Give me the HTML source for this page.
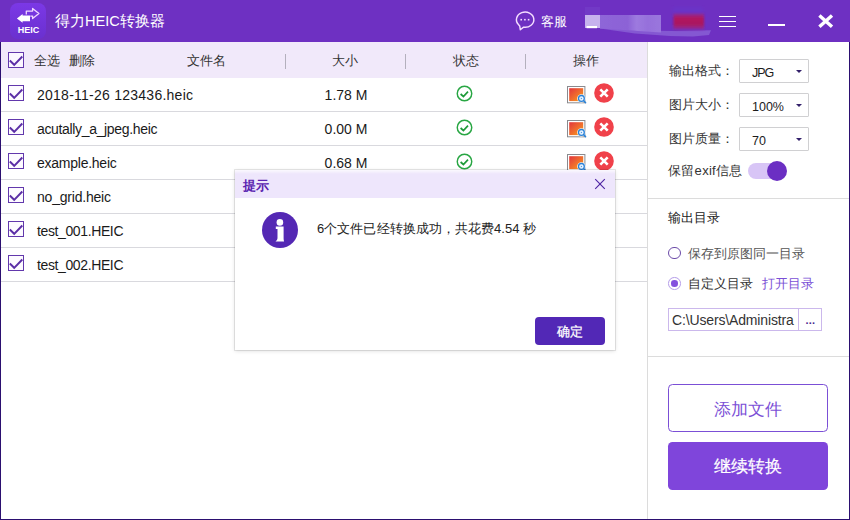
<!DOCTYPE html>
<html lang="zh">
<head>
<meta charset="utf-8">
<title>得力HEIC转换器</title>
<style>
*{box-sizing:border-box;margin:0;padding:0}
html,body{width:850px;height:520px;overflow:hidden;background:#fff}
body{font-family:"Liberation Sans",sans-serif;font-size:13px;color:#333}
#win{position:relative;width:850px;height:520px;overflow:hidden;background:#fff}
.abs{position:absolute}
.t{position:absolute;white-space:nowrap;line-height:20px;height:20px}
/* title bar */
#tb{position:absolute;left:0;top:0;width:850px;height:42px;background:#6e30c2}
#logo{position:absolute;left:10px;top:3px;width:36px;height:36px;border-radius:8px;background:linear-gradient(180deg,#7b38e6 0%,#6a30cf 100%)}
#logo .h{position:absolute;left:0;width:36px;top:22px;text-align:center;font-size:9px;font-weight:bold;color:#fff;line-height:11px;padding-left:1px}
#ttl{left:55px;top:11px;font-size:14.6px;color:#fff}
/* list */
#lh{position:absolute;left:1px;top:42px;width:646px;height:36px;background:#f1e9fa}
.sep{position:absolute;top:54px;width:1px;height:15px;background:#b4b0bd}
.row{position:absolute;left:1px;width:646px;height:34px;border-bottom:1px solid #d9d9de;background:#fff}
.cb{position:absolute;left:7px;width:16px;height:16px}
.fn{position:absolute;left:36px;top:0;line-height:35px;font-size:14px;color:#1a1a1a;white-space:nowrap}
.sz{position:absolute;left:295px;width:100px;top:0;text-align:center;line-height:35px;font-size:14px;color:#1a1a1a;white-space:nowrap}
.ok{position:absolute;left:455px;top:7.4px;width:17px;height:17px}
.im{position:absolute;left:565px;top:8px;width:21px;height:19px}
.rx{position:absolute;left:593px;top:5px;width:20px;height:20px}
/* right panel */
#rp{position:absolute;left:647px;top:42px;width:202px;height:477px;background:#fff;border-left:1px solid #dcdcdc}
.hl{position:absolute;left:648px;width:201px;height:1px;background:#dcdcdc}
.lab{color:#333;font-size:13px}
.dd{position:absolute;left:739px;width:70px;height:24px;border:1px solid #d0d0d2;border-radius:1px;background:#fff}
.dd span{position:absolute;left:12px;top:0;line-height:26px;font-size:12.5px;color:#1c1c1c}
.dd i{position:absolute;left:55.5px;top:10px;width:0;height:0;border-left:3px solid transparent;border-right:3px solid transparent;border-top:3.6px solid #33206a}
.btn{position:absolute;left:668px;width:160px;height:48px;border-radius:4.5px;text-align:center;line-height:49px;font-size:17px}
/* dialog */
#dlg{position:absolute;left:235px;top:170px;width:380px;height:180px;background:#fff;box-shadow:0 0 0 1px rgba(0,0,0,.09),0 1px 4px rgba(0,0,0,.14)}
#dh{position:absolute;left:0;top:0;width:380px;height:28px;background:linear-gradient(180deg,rgba(255,255,255,.75) 0,rgba(255,255,255,0) 4px),#eee6fc}
</style>
</head>
<body>
<div id="win">

<!-- ============ TITLE BAR ============ -->
<div id="tb">
  <div id="logo">
    <svg class="abs" style="left:0;top:0" width="36" height="36" viewBox="0 0 36 36">
      <path d="M16.3 11.6 V8.1 H22.6 V5.5 L28.9 10.5 L22.6 15.5 V13.1 H20.3" fill="none" stroke="#f0d6ff" stroke-width="1.3" stroke-linejoin="round"/>
      <path d="M6.9 15.4 L12.6 11.1 V12.6 H20 V18.2 H12.6 V19.8 Z" fill="#fff"/>
    </svg>
    <div class="h">HEIC</div>
  </div>
  <div id="ttl" class="t">得力HEIC转换器</div>

  <!-- chat icon -->
  <svg class="abs" style="left:513px;top:9px" width="24" height="24" viewBox="0 0 24 24">
    <path d="M5.44 15.5 A8.7 7.6 0 1 1 10.6 18.13 L7.3 20.7 L6.7 16.9 Z" fill="none" stroke="#f4ddff" stroke-width="1.45" stroke-linejoin="round"/>
    <rect x="7.4" y="9.9" width="1.6" height="1.6" fill="#f4ddff"/><rect x="11.1" y="9.9" width="1.6" height="1.6" fill="#f4ddff"/><rect x="14.8" y="9.9" width="1.6" height="1.6" fill="#f4ddff"/>
  </svg>
  <div class="t" style="left:541px;top:12px;font-size:13px;color:#fff">客服</div>

  <!-- blurred (redacted) user name -->
  <svg class="abs" style="left:575px;top:0" width="150" height="42" viewBox="0 0 150 42">
    <defs>
      <filter id="b1" x="-10%" y="-30%" width="120%" height="160%"><feGaussianBlur stdDeviation=".7"/></filter>
      <filter id="b2" x="-10%" y="-30%" width="120%" height="160%"><feGaussianBlur stdDeviation="1.3"/></filter>
      <linearGradient id="gb" x1="0" y1="0" x2="1" y2="0"><stop offset="0" stop-color="#8e66d8"/><stop offset=".45" stop-color="#8c62d6"/><stop offset=".6" stop-color="#9d7adf"/><stop offset=".78" stop-color="#9670db"/><stop offset="1" stop-color="#9a76dd"/></linearGradient>
      <linearGradient id="gr" x1="0" y1="0" x2="0" y2="1"><stop offset="0" stop-color="#8a2a9c"/><stop offset=".3" stop-color="#b2175c"/><stop offset=".7" stop-color="#a81a62"/><stop offset="1" stop-color="#8a2ca4"/></linearGradient>
    </defs>
    <rect x="10" y="7" width="15" height="8" fill="#7744cb" opacity=".45" filter="url(#b1)"/>
    <path d="M25 27.6 L60 30.5 L100 31 L136 30.2 L134 35 L118 36.4 L95 36 L60 33.5 L25 28.6 Z" fill="#8458d2" filter="url(#b1)"/>
    <path d="M25 15 H86 V32.5 L25 28.4 Z" fill="url(#gb)" filter="url(#b1)"/>
    <rect x="10" y="15" width="15" height="13" fill="#c6b2ed" filter="url(#b1)"/>
    <rect x="11.5" y="26" width="10.5" height="2.2" fill="#fff" filter="url(#b1)"/>
    <rect x="98" y="7" width="30" height="6" fill="#6a36c8" opacity=".8" filter="url(#b2)"/>
    <rect x="98.5" y="13.5" width="30.5" height="16" fill="url(#gr)" filter="url(#b2)"/>
  </svg>

  <!-- menu / min / close -->
  <div class="abs" style="left:719px;top:16px;width:17px;height:1px;background:#fff"></div>
  <div class="abs" style="left:719px;top:21px;width:17px;height:1px;background:#fff"></div>
  <div class="abs" style="left:719px;top:26px;width:17px;height:1px;background:#fff"></div>
  <div class="abs" style="left:768px;top:24px;width:17px;height:2px;background:#fff"></div>
  <svg class="abs" style="left:816px;top:12px" width="20" height="18" viewBox="0 0 20 18">
    <path d="M3.4 3.4 L16 14.8 M16 3.4 L3.4 14.8" stroke="#fff" stroke-width="3.4" fill="none"/>
  </svg>
</div>

<!-- ============ LIST HEADER ============ -->
<div id="lh"></div>
<svg class="cb" style="left:8px;top:52px" viewBox="0 0 16 16"><rect x=".5" y=".5" width="15" height="15" fill="#fbf7ff" stroke="#6238ac"/><path d="M1.8 8.5 L6.2 12.8 L14.3 4.5" fill="none" stroke="#5b2ea6" stroke-width="1.9"/></svg>
<div class="t" style="left:34px;top:51px">全选</div>
<div class="t" style="left:69px;top:51px">删除</div>
<div class="t" style="left:187px;top:51px">文件名</div>
<div class="t" style="left:332px;top:51px">大小</div>
<div class="t" style="left:453px;top:51px">状态</div>
<div class="t" style="left:573px;top:51px">操作</div>
<div class="sep" style="left:285px"></div>
<div class="sep" style="left:405px"></div>
<div class="sep" style="left:525px"></div>

<!-- ============ ROWS ============ -->
<svg width="0" height="0" style="position:absolute">
  <defs>
    <linearGradient id="gimg" x1="0" y1="0" x2="1" y2="1"><stop offset="0" stop-color="#e2353d"/><stop offset=".55" stop-color="#f0702c"/><stop offset="1" stop-color="#f7a81c"/></linearGradient>
    <symbol id="s-cb" viewBox="0 0 16 16"><rect x=".5" y=".5" width="15" height="15" fill="#fdfbff" stroke="#6238ac"/><path d="M1.8 8.5 L6.2 12.8 L14.3 4.5" fill="none" stroke="#5b2ea6" stroke-width="1.9"/></symbol>
    <symbol id="s-ok" viewBox="0 0 17 17"><circle cx="8.5" cy="8.5" r="7.25" fill="#fff" stroke="#28a643" stroke-width="1.45"/><path d="M4.6 9 L7.4 11.5 L12 6.7" fill="none" stroke="#1d9a38" stroke-width="1.7"/></symbol>
    <symbol id="s-im" viewBox="0 0 21 19"><rect x="1.5" y=".5" width="17.4" height="16.3" fill="#fff" stroke="#8a8a8e"/><rect x="3.2" y="2.2" width="14" height="12.9" fill="url(#gimg)"/><circle cx="15.4" cy="12.4" r="4.2" fill="#fff"/><circle cx="15.4" cy="12.4" r="2.9" fill="#eef6ff" stroke="#2a82d8" stroke-width="1.3"/><path d="M17.8 14.8 L19.6 16.7" stroke="#2a82d8" stroke-width="1.5" stroke-linecap="round"/><path d="M14.8 11.4 L16.4 12.4 L14.8 13.4 Z" fill="#4a98e0"/></symbol>
    <symbol id="s-rx" viewBox="0 0 20 20"><circle cx="10" cy="10" r="9.8" fill="#f0414a"/><path d="M6.3 6.3 L13.7 13.7 M13.7 6.3 L6.3 13.7" stroke="#fff" stroke-width="2.6" fill="none"/></symbol>
  </defs>
</svg>
<div class="row" style="top:78px">
  <svg class="cb" style="top:7px"><use href="#s-cb"/></svg>
  <div class="fn" style="letter-spacing:0.25px">2018-11-26 123436.heic</div><div class="sz">1.78 M</div>
  <svg class="ok"><use href="#s-ok"/></svg><svg class="im"><use href="#s-im"/></svg><svg class="rx"><use href="#s-rx"/></svg>
</div>
<div class="row" style="top:112px">
  <svg class="cb" style="top:7px"><use href="#s-cb"/></svg>
  <div class="fn" style="letter-spacing:-0.34px">acutally_a_jpeg.heic</div><div class="sz">0.00 M</div>
  <svg class="ok"><use href="#s-ok"/></svg><svg class="im"><use href="#s-im"/></svg><svg class="rx"><use href="#s-rx"/></svg>
</div>
<div class="row" style="top:146px">
  <svg class="cb" style="top:7px"><use href="#s-cb"/></svg>
  <div class="fn" style="letter-spacing:-0.25px">example.heic</div><div class="sz">0.68 M</div>
  <svg class="ok"><use href="#s-ok"/></svg><svg class="im"><use href="#s-im"/></svg><svg class="rx"><use href="#s-rx"/></svg>
</div>
<div class="row" style="top:180px">
  <svg class="cb" style="top:7px"><use href="#s-cb"/></svg>
  <div class="fn" style="letter-spacing:-0.21px">no_grid.heic</div><div class="sz">0.52 M</div>
  <svg class="ok"><use href="#s-ok"/></svg><svg class="im"><use href="#s-im"/></svg><svg class="rx"><use href="#s-rx"/></svg>
</div>
<div class="row" style="top:214px">
  <svg class="cb" style="top:7px"><use href="#s-cb"/></svg>
  <div class="fn" style="letter-spacing:-0.38px">test_001.HEIC</div><div class="sz">0.71 M</div>
  <svg class="ok"><use href="#s-ok"/></svg><svg class="im"><use href="#s-im"/></svg><svg class="rx"><use href="#s-rx"/></svg>
</div>
<div class="row" style="top:248px">
  <svg class="cb" style="top:7px"><use href="#s-cb"/></svg>
  <div class="fn" style="letter-spacing:-0.38px">test_002.HEIC</div><div class="sz">0.69 M</div>
  <svg class="ok"><use href="#s-ok"/></svg><svg class="im"><use href="#s-im"/></svg><svg class="rx"><use href="#s-rx"/></svg>
</div>


<!-- ============ RIGHT PANEL ============ -->
<div id="rp"></div>
<!-- format / size / quality -->
<div class="t lab" style="left:669px;top:61px">输出格式：</div>
<div class="dd" style="top:59px"><span style="letter-spacing:-1px">JPG</span><i></i></div>
<div class="t lab" style="left:669px;top:95px">图片大小：</div>
<div class="dd" style="top:93px"><span>100%</span><i></i></div>
<div class="t lab" style="left:669px;top:129px">图片质量：</div>
<div class="dd" style="top:127px"><span>70</span><i></i></div>
<div class="t lab" style="left:668px;top:161px;letter-spacing:.3px">保留exif信息</div>
<div class="abs" style="left:748px;top:163px;width:36px;height:16px;border-radius:8px;background:#d8c5f6"></div>
<div class="abs" style="left:767px;top:161px;width:20px;height:20px;border-radius:10px;background:#6b2fc3"></div>
<div class="hl" style="top:198px"></div>
<!-- output dir -->
<div class="t" style="left:668px;top:208px;font-size:13px;color:#222">输出目录</div>
<div class="abs" style="left:668px;top:246.8px;width:12.6px;height:12.6px;border-radius:50%;border:1.3px solid #6b4aa8;background:#fff"></div>
<div class="t" style="left:688px;top:243.5px;color:#555">保存到原图同一目录</div>
<div class="abs" style="left:668px;top:277px;width:12.6px;height:12.6px;border-radius:50%;border:1.7px solid #b59de9;background:#fff"></div>
<div class="abs" style="left:671px;top:280px;width:6.6px;height:6.6px;border-radius:50%;background:#8450de"></div>
<div class="t" style="left:688px;top:273.5px;color:#333">自定义目录</div>
<div class="t" style="left:762px;top:273.5px;color:#7b4fd6">打开目录</div>
<div class="abs" style="left:668px;top:308px;width:154px;height:23px;border:1px solid #cbb8ec;background:#fff"></div>
<div class="abs" style="left:798px;top:308px;width:1px;height:23px;background:#cbb8ec"></div>
<div class="t" style="left:672px;top:310px;font-size:14px;letter-spacing:-.15px;color:#333;width:125px;overflow:hidden">C:\Users\Administra</div>
<div class="t" style="left:805.5px;top:310px;font-size:11px;font-weight:bold;color:#4a2a90;letter-spacing:.2px;line-height:20px">...</div>
<div class="hl" style="top:356px"></div>
<!-- buttons -->
<div class="btn" style="top:384px;border:1px solid #7b4fd6;color:#7b4fd6;background:#fff">添加文件</div>
<div class="btn" style="top:442px;background:#7f45db;color:#fff;line-height:50px;-webkit-text-stroke:.2px #fff">继续转换</div>

<!-- ============ DIALOG ============ -->
<div id="dlg"><div id="dh"></div>
  <div class="t" style="left:8px;top:6px;font-size:13px;font-weight:bold;color:#5a22b0">提示</div>
  <svg class="abs" style="left:358.6px;top:8.2px" width="12" height="12" viewBox="0 0 12 12"><path d="M1.2 1.2 L10.8 10.8 M10.8 1.2 L1.2 10.8" stroke="#4f26a4" stroke-width="1.15" fill="none"/></svg>
  <svg class="abs" style="left:27px;top:42px" width="36" height="36" viewBox="0 0 36 36"><circle cx="18" cy="18" r="18" fill="#5428b4"/><circle cx="17.9" cy="10.4" r="3.3" fill="#fff"/><path d="M13.8 14.5 H21.6 V26.2 Q21.6 28 22.1 29.5 H13.5 Q15.5 28 15.5 26.2 V17 H13.8 Z" fill="#fff"/></svg>
  <div class="t" style="left:82px;top:49px;font-size:13px;letter-spacing:.06px;color:#222">6个文件已经转换成功，共花费4.54 秒</div>
  <div class="abs" style="left:300px;top:147px;width:70px;height:28px;border-radius:4px;background:#5228b6;color:#fff;text-align:center;line-height:29px;font-size:13px;-webkit-text-stroke:.25px #fff">确定</div>
</div>

<!-- window border -->
<div class="abs" style="left:0;top:42px;width:1px;height:478px;background:#2b0f70"></div>
<div class="abs" style="left:849px;top:42px;width:1px;height:478px;background:#2b0f70"></div>
<div class="abs" style="left:0;top:519px;width:850px;height:1px;background:#2b0f70"></div>
</div>
</body>
</html>
